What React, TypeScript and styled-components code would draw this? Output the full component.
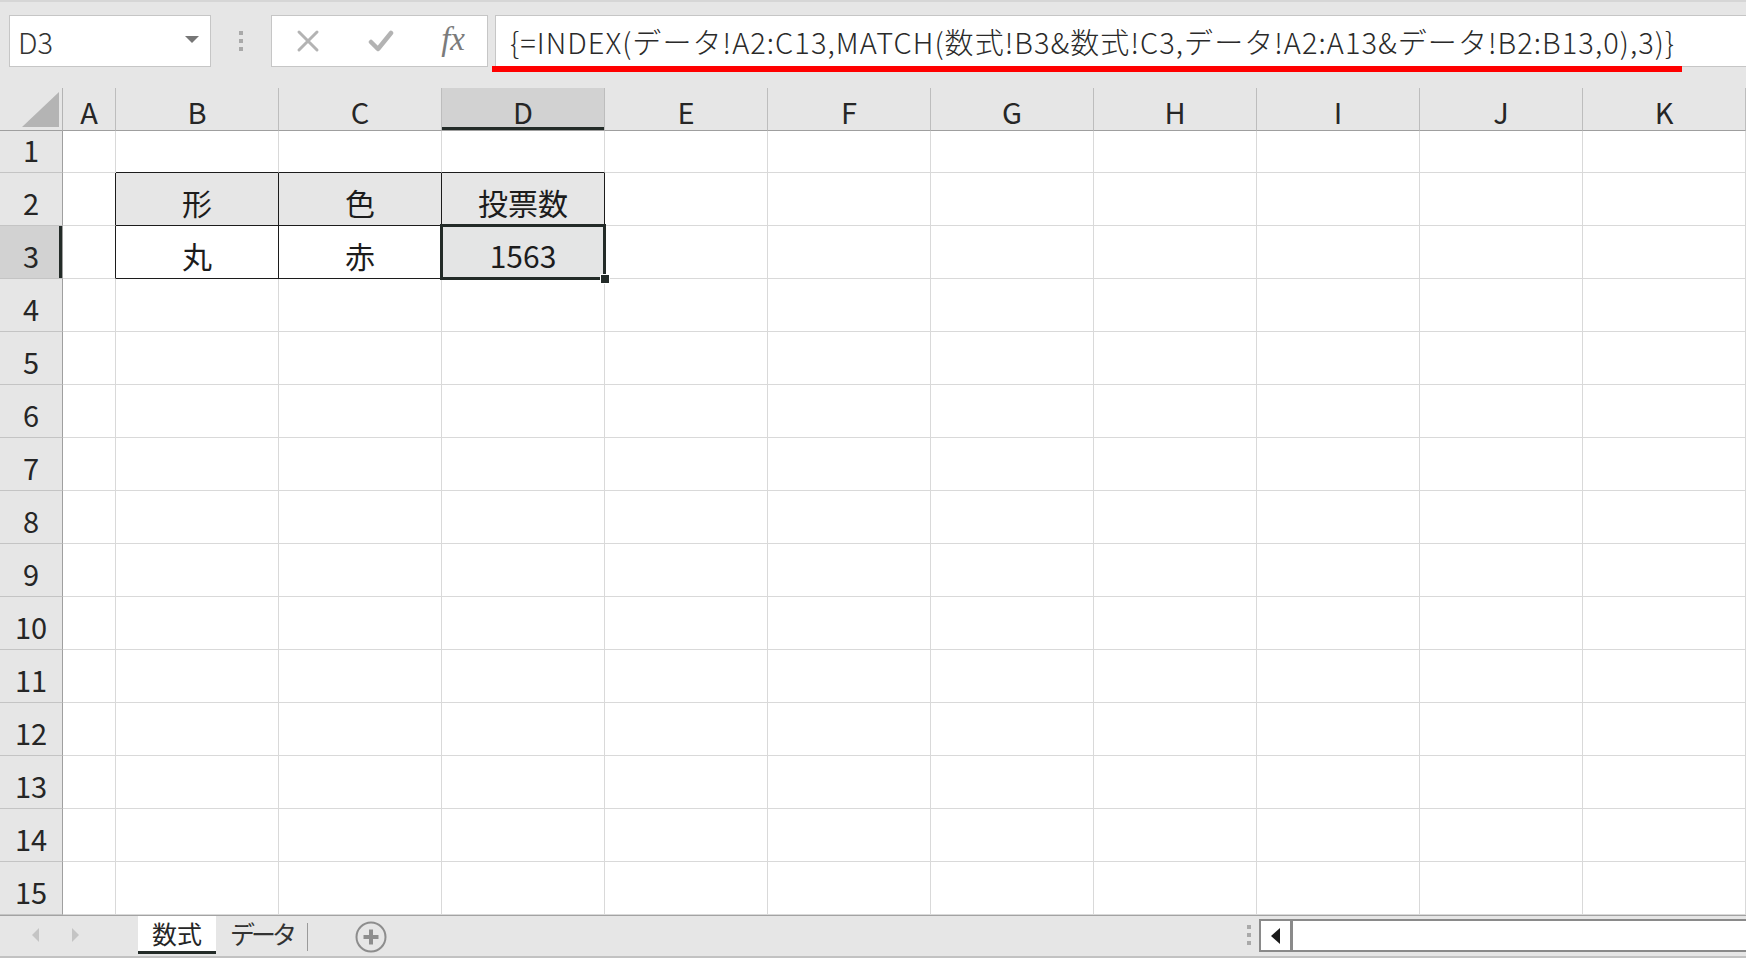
import React from 'react'
import styled, { createGlobalStyle, css } from 'styled-components'

const GlobalStyle = createGlobalStyle`
	html, body {
		margin: 0;
		padding: 0;
		background: #e6e6e6;
	}
	body {
		font-family: 'Noto Sans CJK JP', 'Noto Sans', sans-serif;
		color: #262626;
	}
`

const COLS = ['A', 'B', 'C', 'D', 'E', 'F', 'G', 'H', 'I', 'J', 'K']
const ROWS = Array.from({ length: 15 }, (_, i) => i + 1)

// B2:D3 holds the small lookup table
const DATA: Record<string, string> = {
	B2: '形', C2: '色', D2: '投票数',
	B3: '丸', C3: '赤', D3: '1563',
}

const inTable = (col: string, row: number) => ['B', 'C', 'D'].includes(col) && (row === 2 || row === 3)

const SELECTED_COL = 'D'
const SELECTED_ROW = 3
const FORMULA = '{=INDEX(データ!A2:C13,MATCH(数式!B3&数式!C3,データ!A2:A13&データ!B2:B13,0),3)}'

const Window = styled.div`
	width: 1746px;
	height: 958px;
	overflow: hidden;
	display: flex;
	flex-direction: column;
	background: #e6e6e6;
	border-top: 2px solid #d6d6d6;
	box-sizing: border-box;
`

const FormulaBar = styled.div`
	height: 86px;
	flex: none;
	display: flex;
	align-items: flex-start;
	padding: 13px 0 0 9px;
	box-sizing: border-box;
`

const Box = styled.div`
	height: 52px;
	box-sizing: border-box;
	background: #fff;
	border: 1px solid #c6c6c6;
	display: flex;
	align-items: center;
`

const NameBox = styled(Box)`
	width: 202px;
	padding: 0 11px 0 8px;
	justify-content: space-between;
	font-size: 29px;
	font-weight: 300;
	color: #333;
`

const DropArrow = styled.span`
	width: 0;
	height: 0;
	border-left: 7px solid transparent;
	border-right: 7px solid transparent;
	border-top: 7px solid #767676;
	margin-top: -4px;
`

const Grip = styled.div<{ $width: number; $height: number }>`
	width: ${p => p.$width}px;
	height: ${p => p.$height}px;
	flex: none;
	display: flex;
	flex-direction: column;
	align-items: center;
	justify-content: center;
	gap: 4px;

	span {
		width: 4px;
		height: 4px;
		background: #a9a9a9;
	}
`

const FxBox = styled(Box)`
	width: 217px;
	justify-content: space-between;
	padding: 0 22px 0 24px;
`

const FxLabel = styled.span`
	font-family: 'Liberation Serif', serif;
	font-style: italic;
	font-size: 33px;
	color: #7b7b7b;
	margin-top: -4px;
`

const FormulaInput = styled(Box)`
	flex: 1;
	margin-left: 7px;
	border-right: none;
	padding-left: 14px;
	position: relative;
	font-size: 29px;
	font-weight: 300;
	letter-spacing: 1.05px;
	color: #2a2a2a;
	white-space: nowrap;
`

const RedUnderline = styled.div`
	position: absolute;
	left: -4px;
	right: 64px;
	bottom: -6px;
	height: 6px;
	background: #ff0000;
`

const Grid = styled.div`
	flex: none;
	display: grid;
	grid-template-columns: 63px 53px repeat(10, 163px);
	grid-template-rows: 43px 42px repeat(14, 53px);
	background: #fff;
`

const Corner = styled.div`
	position: relative;
	background: #e6e6e6;
	border-right: 1px solid #b4b4b4;
	border-bottom: 1px solid #9f9f9f;

	&::after {
		content: '';
		position: absolute;
		right: 3px;
		bottom: 3px;
		width: 37px;
		height: 35px;
		background: #b4b4b4;
		clip-path: polygon(100% 0, 100% 100%, 0 100%);
	}
`

const headerText = css`
	display: flex;
	justify-content: center;
	font-size: 29px;
	line-height: 35px;
	color: #262626;
	box-sizing: border-box;
`

const ColHead = styled.div<{ $active?: boolean }>`
	${headerText}
	align-items: center;
	padding-top: 4px;
	background: ${p => (p.$active ? '#d2d2d2' : '#e6e6e6')};
	border-right: 1px solid #bdbdbd;
	border-bottom: 1px solid #9f9f9f;
	box-shadow: ${p => (p.$active ? 'inset 0 -3px 0 #232b28' : 'none')};
`

// row numbers sit on the bottom of the row, like cell text does
const RowHead = styled.div<{ $active?: boolean }>`
	${headerText}
	align-items: flex-end;
	padding-bottom: 5px;
	background: ${p => (p.$active ? '#d2d2d2' : '#e6e6e6')};
	border-right: 1px solid #9f9f9f;
	border-bottom: 1px solid #c4c4c4;
	box-shadow: ${p => (p.$active ? 'inset -3px 0 0 #232b28' : 'none')};
`

const Cell = styled.div<{ $fill?: string; $darkRight?: boolean; $darkBottom?: boolean }>`
	position: relative;
	display: flex;
	align-items: flex-end;
	justify-content: center;
	padding-bottom: 5px;
	box-sizing: border-box;
	font-size: 30px;
	line-height: 36px;
	color: #1c1c1c;
	background: ${p => p.$fill || '#fff'};
	border-right: 1px solid ${p => (p.$darkRight ? '#1c1c1c' : '#d9d9d9')};
	border-bottom: 1px solid ${p => (p.$darkBottom ? '#1c1c1c' : '#d9d9d9')};
`

const Selection = styled.div`
	position: absolute;
	z-index: 2;
	left: -2px;
	top: -2px;
	right: -2px;
	bottom: -2px;
	border: 3px solid #232b28;
	pointer-events: none;
`

const FillHandle = styled.div`
	position: absolute;
	right: -7px;
	bottom: -7px;
	width: 8px;
	height: 8px;
	background: #232b28;
	border: 1px solid #fff;
`

const SheetBar = styled.div`
	flex: 1;
	display: flex;
	align-items: flex-start;
	border-top: 1px solid #a3a3a3;
	border-bottom: 2px solid #c2c2c2;
	box-sizing: border-box;
`

const NavArrows = styled.div`
	width: 138px;
	height: 38px;
	display: flex;
	align-items: center;
	padding-left: 32px;
	gap: 33px;
	box-sizing: border-box;
`

const Tab = styled.div<{ $active?: boolean; $tight?: boolean }>`
	height: 35px;
	padding: 0 14px;
	display: flex;
	align-items: center;
	font-size: 25px;
	letter-spacing: ${p => (p.$tight ? -4 : 0)}px;
	box-sizing: content-box;
	color: ${p => (p.$active ? '#262626' : '#333')};
	background: ${p => (p.$active ? '#fff' : 'transparent')};
	border-bottom: 3px solid ${p => (p.$active ? '#232b28' : 'transparent')};
	line-height: 1;
`

const TabDivider = styled.div`
	width: 1px;
	height: 28px;
	margin-top: 7px;
	background: #9a9a9a;
`

const AddSheet = styled.div`
	margin: 5px 0 0 47px;
	display: flex;
`

const Spacer = styled.div`
	flex: 1;
`

const ScrollTrack = styled.div`
	width: 487px;
	height: 33px;
	margin-top: 3px;
	display: flex;
	background: #fff;
	border: 2px solid #8a8a8a;
	border-right: none;
	box-sizing: border-box;
`

const ScrollButton = styled.div`
	width: 32px;
	display: flex;
	align-items: center;
	justify-content: center;
	border-right: 3px solid #8a8a8a;
	box-sizing: border-box;
`

const Triangle = ({ dir, color, w, h }: { dir: 'left' | 'right'; color: string; w: number; h: number }) => (
	<svg width={w} height={h} viewBox={`0 0 ${w} ${h}`}>
		{dir === 'left'
			? <polygon points={`${w},0 ${w},${h} 0,${h / 2}`} fill={color} />
			: <polygon points={`0,0 0,${h} ${w},${h / 2}`} fill={color} />}
	</svg>
)

const CancelIcon = () => (
	<svg width="24" height="24" viewBox="0 0 24 24">
		<path d="M3 3 L21 21 M21 3 L3 21" stroke="#b3b3b3" strokeWidth="3" strokeLinecap="round" />
	</svg>
)

const EnterIcon = () => (
	<svg width="26" height="22" viewBox="0 0 26 22">
		<path d="M3 12 L10 19 L23 3" stroke="#b3b3b3" strokeWidth="4.5" fill="none" strokeLinecap="round" strokeLinejoin="round" />
	</svg>
)

const PlusCircle = () => (
	<svg width="32" height="32" viewBox="0 0 32 32">
		<circle cx="16" cy="16" r="14.5" stroke="#8d8d8d" strokeWidth="2" fill="none" />
		<path d="M16 8.5 V23.5 M8.5 16 H23.5" stroke="#8d8d8d" strokeWidth="4" />
	</svg>
)

const renderRow = (row: number) => {
	const cells = COLS.map(col => {
		const key = `${col}${row}`
		const table = inTable(col, row)
		const selected = col === SELECTED_COL && row === SELECTED_ROW
		let fill: string | undefined
		if (table && row === 2) fill = '#e6e6e6'
		if (selected) fill = '#e4e5e5'

		return (
			<Cell
				key={key}
				$fill={fill}
				$darkRight={table || (col === 'A' && (row === 2 || row === 3))}
				$darkBottom={table || (row === 1 && ['B', 'C', 'D'].includes(col))}
			>
				{DATA[key]}
				{selected && (
					<Selection>
						<FillHandle />
					</Selection>
				)}
			</Cell>
		)
	})

	return (
		<React.Fragment key={row}>
			<RowHead $active={row === SELECTED_ROW}>{row}</RowHead>
			{cells}
		</React.Fragment>
	)
}

const App = () => {
	return (
		<Window>
			<GlobalStyle />

			<FormulaBar>
				<NameBox>
					D3
					<DropArrow />
				</NameBox>
				<Grip $width={60} $height={52}>
					<span /><span /><span />
				</Grip>
				<FxBox>
					<CancelIcon />
					<EnterIcon />
					<FxLabel>fx</FxLabel>
				</FxBox>
				<FormulaInput>
					{FORMULA}
					<RedUnderline />
				</FormulaInput>
			</FormulaBar>

			<Grid>
				<Corner />
				{COLS.map(col => (
					<ColHead key={col} $active={col === SELECTED_COL}>{col}</ColHead>
				))}
				{ROWS.map(renderRow)}
			</Grid>

			<SheetBar>
				<NavArrows>
					<Triangle dir="left" color="#c4c4c4" w={7} h={14} />
					<Triangle dir="right" color="#c4c4c4" w={7} h={14} />
				</NavArrows>
				<Tab $active>数式</Tab>
				<Tab $tight>データ</Tab>
				<TabDivider />
				<AddSheet>
					<PlusCircle />
				</AddSheet>
				<Spacer />
				<Grip $width={20} $height={38}>
					<span /><span /><span />
				</Grip>
				<ScrollTrack>
					<ScrollButton>
						<Triangle dir="left" color="#1a1a1a" w={9} h={16} />
					</ScrollButton>
				</ScrollTrack>
			</SheetBar>
		</Window>
	)
}

export default App
